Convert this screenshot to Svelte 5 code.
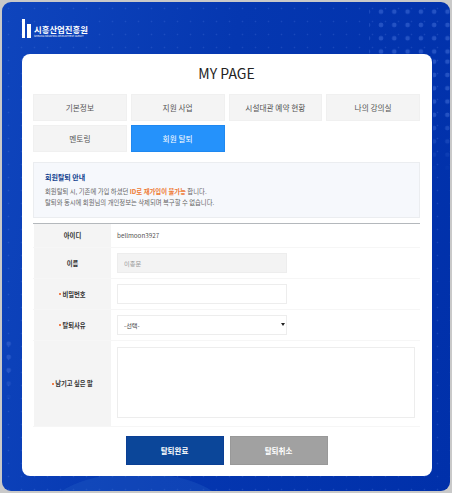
<script>
  const tabs = [
    { label: '기본정보' },
    { label: '지원 사업' },
    { label: '시설대관 예약 현황' },
    { label: '나의 강의실' },
    { label: '멘토링' },
    { label: '회원 탈퇴', active: true }
  ];
</script>

<div class="page">
  <div class="frame">
    <div class="dots-top"></div>
    <div class="dots-side"></div>
    <div class="dots-left"></div>
    <div class="dots-faint"></div>
    <div class="glow"></div>

    <header class="brand">
      <svg class="mark" width="9" height="19" viewBox="0 0 9 19">
        <rect x="0" y="0" width="3" height="19" fill="#fff" />
        <rect x="5" y="5" width="4" height="14" fill="#fff" />
      </svg>
      <div class="brand-text">
        <strong>시흥산업진흥원</strong>
        <small>SIHEUNG INDUSTRIAL DEVELOPMENT AGENCY</small>
      </div>
    </header>

    <main class="card">
      <h1>MY PAGE</h1>

      <nav class="tabs">
        {#each tabs as tab}
          <a href="#top" class="tab" class:active={tab.active}>{tab.label}</a>
        {/each}
      </nav>

      <section class="notice">
        <h2>회원탈퇴 안내</h2>
        <p>회원탈퇴 시, 기존에 가입 하셨던 <b>ID로 재가입이 불가능</b> 합니다.</p>
        <p>탈퇴와 동시에 회원님의 개인정보는 삭제되며 복구할 수 없습니다.</p>
      </section>

      <div class="form">
        <div class="row r-id">
          <div class="label">아이디</div>
          <div class="value">bellmoon3927</div>
        </div>
        <div class="row r-input">
          <div class="label">이름</div>
          <div class="value"><input class="field" disabled value="이종문" /></div>
        </div>
        <div class="row r-input">
          <div class="label"><i></i>비밀번호</div>
          <div class="value"><input class="field" type="password" /></div>
        </div>
        <div class="row r-input">
          <div class="label"><i></i>탈퇴사유</div>
          <div class="value">
            <div class="select-wrap">
              <select class="field">
                <option>-선택-</option>
              </select>
            </div>
          </div>
        </div>
        <div class="row r-text">
          <div class="label"><i></i>남기고 싶은 말</div>
          <div class="value"><textarea></textarea></div>
        </div>
      </div>

      <div class="actions">
        <button class="primary">탈퇴완료</button>
        <button class="cancel">탈퇴취소</button>
      </div>
    </main>
  </div>
</div>

<style>
  :global(body) {
    margin: 0;
    background: #c9c9c9;
  }

  .page {
    width: 452px;
    height: 493px;
    padding: 2px 2px 2px 2px;
    box-sizing: border-box;
    font-family: "Noto Sans CJK KR", "Noto Sans", sans-serif;
  }

  .frame {
    position: relative;
    height: 100%;
    box-sizing: border-box;
    border-radius: 9px;
    overflow: hidden;
    padding: 17px 18px 15px 20px;
    background: linear-gradient(100deg, #0f45bd 0%, #0537b0 45%, #0030aa 100%);
    display: flex;
    flex-direction: column;
  }

  .dots-top,
  .dots-side,
  .dots-left {
    position: absolute;
    background-image: radial-gradient(circle, rgba(50, 95, 205, 0.7) 2px, transparent 2.6px);
    background-size: 13.3px 13.3px;
  }

  .dots-top {
    top: 3px;
    right: 0;
    width: 81px;
    height: 50px;
    background-position: 5.35px 0;
  }

  .dots-side {
    top: 53px;
    right: 0;
    width: 17px;
    height: 120px;
    background-position: -5.6px 0;
    -webkit-mask-image: linear-gradient(#000 50%, transparent);
    mask-image: linear-gradient(#000 50%, transparent);
  }

  .dots-left {
    left: 0;
    top: 335px;
    width: 10px;
    height: 66px;
    -webkit-mask-image: linear-gradient(#000 50%, transparent);
    mask-image: linear-gradient(#000 50%, transparent);
  }

  .dots-faint {
    position: absolute;
    inset: 0;
    background-image: radial-gradient(circle, rgba(90, 130, 225, 0.25) 0.6px, transparent 1.1px);
    background-size: 13px 13px;
  }

  .glow {
    position: absolute;
    left: 45px;
    bottom: -62px;
    width: 180px;
    height: 80px;
    border-radius: 50%;
    background: rgba(40, 100, 200, 0.3);
  }

  .brand {
    position: relative;
    display: flex;
    align-items: flex-end;
    gap: 3px;
    height: 19px;
    margin-bottom: 16px;
    color: #fff;
  }

  .mark {
    display: block;
  }

  .brand-text {
    display: flex;
    flex-direction: column;
    gap: 1px;
  }

  .brand-text strong {
    font-size: 8.4px;
    line-height: 10px;
    font-weight: 700;
    white-space: nowrap;
  }

  .brand-text small {
    font-size: 2.3px;
    line-height: 3px;
    white-space: nowrap;
  }

  .card {
    position: relative;
    width: 410px;
    flex: 1;
    box-sizing: border-box;
    background: #fff;
    border-radius: 8px;
    padding: 6px 12px 0 11px;
  }

  h1 {
    margin: 0 0 8px;
    height: 26px;
    font-size: 14px;
    line-height: 26px;
    font-weight: 400;
    text-align: center;
    color: #222;
  }

  .tabs {
    display: grid;
    grid-template-columns: repeat(4, 1fr);
    gap: 4px;
  }

  .tab {
    height: 27px;
    line-height: 25px;
    box-sizing: border-box;
    background: #f4f4f4;
    border: 1px solid #f0f0f0;
    text-align: center;
    font-size: 7.7px;
    color: #555;
    text-decoration: none;
  }

  .tab.active {
    background: #2592fb;
    border-color: #1f88f0;
    color: #fff;
  }

  .notice {
    margin-top: 10px;
    height: 56px;
    box-sizing: border-box;
    padding: 9px 11px;
    background: #f6f8fc;
    border: 1px solid #ebedf0;
  }

  .notice h2 {
    margin: 0 0 3px;
    font-size: 7px;
    line-height: 11px;
    font-weight: 700;
    color: #123f8f;
  }

  .notice p {
    margin: 0;
    font-size: 6.35px;
    line-height: 11px;
    color: #666;
  }

  .notice b {
    color: #ee7a34;
    font-weight: 700;
  }

  .form {
    margin-top: 5px;
    border-top: 1px solid #b4b8bc;
  }

  .row {
    display: flex;
    border-bottom: 1px solid #f6f6f6;
    box-sizing: border-box;
  }

  .r-id { height: 24px; }
  .r-input { height: 31px; }
  .r-text { height: 86px; }

  .label {
    width: 77px;
    margin-left: 1px;
    flex: none;
    background: #f4f4f4;
    display: flex;
    align-items: center;
    justify-content: center;
    gap: 1px;
    font-size: 6.3px;
    font-weight: 700;
    color: #333;
  }

  .label i {
    width: 2px;
    height: 2px;
    border-radius: 50%;
    background: #f05a14;
  }

  .value {
    flex: 1;
    display: flex;
    align-items: center;
    padding-left: 6px;
    font-size: 6.3px;
    color: #555;
  }

  .select-wrap {
    position: relative;
    height: 20px;
  }

  .select-wrap::after {
    content: "";
    position: absolute;
    right: 2px;
    top: 8px;
    border-left: 2.5px solid transparent;
    border-right: 2.5px solid transparent;
    border-top: 3px solid #222;
  }

  .field {
    display: block;
    width: 170px;
    height: 20px;
    box-sizing: border-box;
    padding: 0 6px;
    background: #fff;
    border: 1px solid #ededed;
    border-radius: 0;
    font: 6.2px "Noto Sans CJK KR", sans-serif;
    color: #444;
    appearance: none;
  }

  input:disabled {
    background: #f3f3f3;
    color: #999;
  }

  textarea {
    display: block;
    width: 298px;
    height: 71px;
    box-sizing: border-box;
    background: #fff;
    border: 1px solid #ededed;
    resize: none;
    margin-bottom: 2px;
  }

  .actions {
    display: flex;
    justify-content: center;
    gap: 6px;
    margin-top: 9px;
  }

  button {
    width: 98px;
    height: 29px;
    border: 1px solid transparent;
    border-radius: 0;
    color: #fff;
    font: 700 7.5px "Noto Sans CJK KR", sans-serif;
  }

  .primary {
    background: #0b4699;
    border-color: #0a3f94;
  }

  .cancel {
    background: #a1a1a1;
    border-color: #999;
  }
</style>
